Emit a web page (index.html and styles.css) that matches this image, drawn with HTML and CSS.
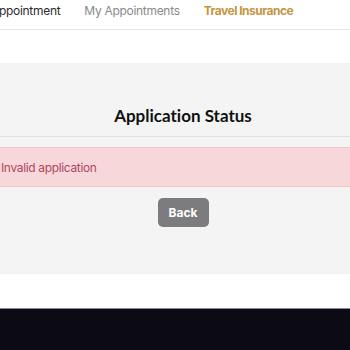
FILE: index.html
```html
<!DOCTYPE html>
<html>
<head>
<meta charset="utf-8">
<link rel="stylesheet" href="styles.css">
</head>
<body>
<nav class="topnav">
  <a class="nav-link nav-dark">Appointment</a>
  <a class="nav-link nav-muted">My Appointments</a>
  <a class="nav-link nav-gold">Travel Insurance</a>
</nav>
<div class="spacer"></div>
<main class="status-section">
  <div class="container">
    <h1 class="title">Application Status</h1>
    <div class="divider"></div>
    <div class="alert">Invalid application</div>
    <div class="actions"><button class="btn-back">Back</button></div>
  </div>
</main>
<div class="gap"></div>
<footer class="footer"></footer>
</body>
</html>
```
FILE: styles.css
```css
html, body { margin: 0; padding: 0; }
body {
  width: 350px;
  height: 350px;
  overflow: hidden;
  background: #ffffff;
  font-family: "Inter", "Noto Sans", sans-serif;
}
.topnav {
  display: flex;
  align-items: flex-start;
  gap: 24px;
  height: 30px;
  box-sizing: border-box;
  padding-top: 3px;
  margin-left: -9px;
  border-bottom: 1px solid #e6e6e6;
  font-size: 12px;
  line-height: 16px;
  letter-spacing: -0.3px;
}
.nav-link { white-space: nowrap; }
.nav-dark { color: #2b2b2b; }
.nav-muted { color: #8a8a8a; }
.nav-gold { color: #c5953f; font-weight: 700; letter-spacing: -0.5px; }
.spacer { height: 33px; }
.status-section {
  background: #f4f4f4;
  height: 211px;
  padding-top: 40px;
  box-sizing: border-box;
}
.container {
  margin-left: -16px;
  width: 398px;
}
.title {
  margin: 0;
  text-align: center;
  font-family: "Lato", sans-serif;
  font-weight: 700;
  font-variant-ligatures: none;
  font-size: 17px;
  line-height: 26px;
  color: #111111;
}
.divider {
  margin-top: 7px;
  height: 1px;
  background: #e2e2e2;
}
.alert {
  margin-top: 10px;
  height: 40px;
  box-sizing: border-box;
  padding: 0 16px;
  display: flex;
  align-items: center;
  background: #f8d7da;
  border: 1px solid #f3c5ca;
  color: #b0485a;
  font-size: 12px;
  letter-spacing: -0.35px;
}
.actions {
  display: flex;
  justify-content: center;
  margin-top: 11px;
}
.btn-back {
  width: 51px;
  height: 29px;
  border: none;
  border-radius: 5px;
  background: #7c7c7e;
  color: #ffffff;
  font-family: "Inter", sans-serif;
  font-weight: 700;
  font-size: 12px;
  padding: 0;
}
.gap { height: 34px; border-bottom: 1px solid #8a8a8a; }
.footer { height: 60px; background: #0c0b15; }
```
